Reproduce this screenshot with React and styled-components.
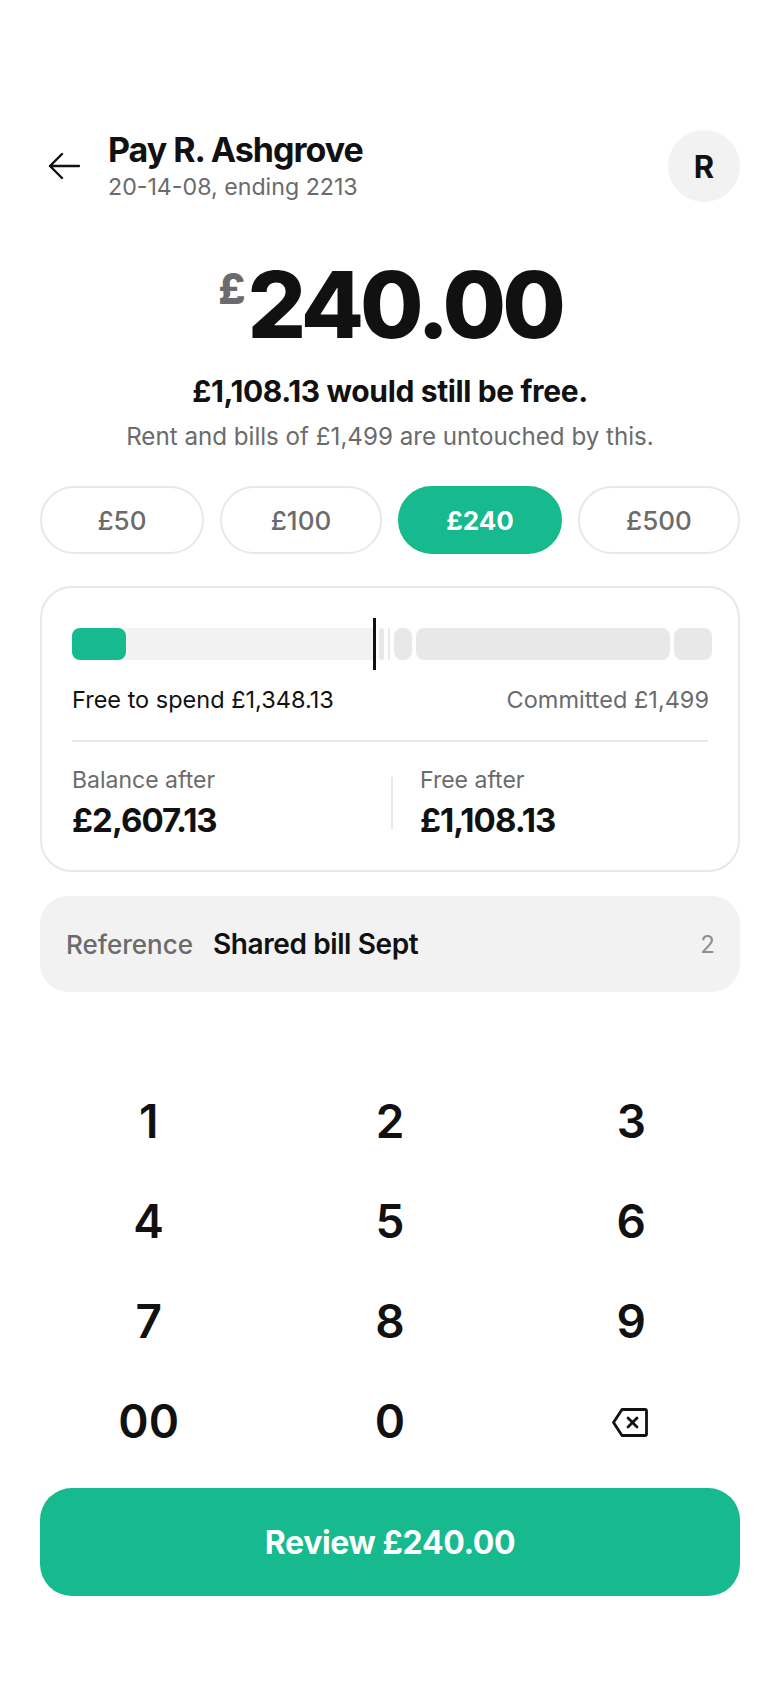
import React from "react";
import styled, { createGlobalStyle } from "styled-components";

const Global = createGlobalStyle`
  html, body { margin: 0; padding: 0; background: #fff; }
  body { font-family: Inter, "Noto Sans", sans-serif; color: #111; }
  * { box-sizing: border-box; }
`;
const Page = styled.div`
  width: 780px; height: 1688px; padding: 130px 40px 0; display: flex; flex-direction: column;
`;
const Header = styled.header`display: flex; align-items: center; height: 72px;`;
const BackButton = styled.div`width: 68px; display: flex; padding-left: 8px; align-items: center;`;
const Titles = styled.div`flex: 1; display: flex; flex-direction: column;`;
const Title = styled.div`font-size: 34px; line-height: 40px; font-weight: 700; letter-spacing: -1.02px;`;
const Sub = styled.div`font-size: 23.2px; line-height: 30px; color: #6b6b6b; margin-top: 2px;`;
const Avatar = styled.div`
  width: 72px; height: 72px; border-radius: 50%; background: #f2f2f2; display: flex;
  align-items: center; justify-content: center; font-size: 31px; font-weight: 700;
`;
const Amount = styled.div`
  display: flex; justify-content: center; align-items: flex-start; margin-top: 53px; height: 100px;
`;
const Pound = styled.span`font-size: 42px; line-height: 56px; font-weight: 800; color: #6b6b6b; margin: 6px 2px 0 0;`;
const Digits = styled.span`font-size: 92px; line-height: 100px; font-weight: 800; letter-spacing: -4px;`;
const Headline = styled.div`text-align: center; font-size: 30px; line-height: 36px; font-weight: 700; letter-spacing: -0.37px; margin-top: 18px;`;
const Note = styled.div`text-align: center; font-size: 24.15px; line-height: 32px; color: #6b6b6b; margin-top: 12px;`;
const Pills = styled.div`display: grid; grid-template-columns: 164fr 162fr 164fr 162fr; gap: 16px; margin-top: 33px;`;
const Pill = styled.div`
  height: 68px; border-radius: 34px; display: flex; align-items: center; justify-content: center;
  font-size: 26px; font-weight: ${p => (p.$on ? 700 : 500)};
  background: ${p => (p.$on ? "#17b98e" : "#fff")}; color: ${p => (p.$on ? "#fff" : "#6b6b6b")};
  border: 2px solid ${p => (p.$on ? "#17b98e" : "#e8e8e8")};
`;
const Card = styled.section`
  margin-top: 32px; height: 286px; border: 2px solid #e8e8e8; border-radius: 32px; padding: 40px 30px 0;
`;
const Bar = styled.div`position: relative; display: flex; gap: 4px; height: 32px; width: 640px;`;
const Track = styled.div`
  width: 303px; height: 32px; background: #f2f2f2; border-radius: 8px 0 0 8px;
`;
const Fill = styled.div`width: 54px; height: 32px; background: #17b98e; border-radius: 8px;`;
const Segment = styled.div`height: 32px; background: #e8e8e8; border-radius: 8px; flex: none; width: ${p => p.$w}px;`;
const Marker = styled.div`position: absolute; left: 301px; top: -10px; width: 3px; height: 52px; background: #111;`;
const Legend = styled.div`display: flex; justify-content: space-between; width: 637px; margin-top: 24px; font-size: 23.5px; line-height: 32px;`;
const LegendDim = styled.span`color: #6b6b6b;`;
const Divider = styled.div`width: 636px; height: 2px; background: #e8e8e8; margin-top: 24px;`;
const Stats = styled.div`display: grid; grid-template-columns: 319px 2px 1fr; width: 636px; margin-top: 24px;`;
const Stat = styled.div`display: flex; flex-direction: column; padding-left: ${p => p.$inset || 0}px;`;
const StatSep = styled.div`width: 2px; height: 52px; background: #e8e8e8; align-self: center;`;
const StatLabel = styled.div`font-size: 23px; line-height: 28px; color: #6b6b6b;`;
const StatValue = styled.div`font-size: 33px; line-height: 40px; font-weight: 700; letter-spacing: -0.99px; margin-top: 6px;`;
const Reference = styled.div`
  margin-top: 24px; height: 96px; background: #f2f2f2; border-radius: 28px; display: flex; align-items: center; padding: 0 25px 0 26px;
`;
const RefLabel = styled.span`font-size: 26px; font-weight: 500; color: #6b6b6b; margin-right: 20px;`;
const RefValue = styled.span`font-size: 28px; font-weight: 600; letter-spacing: -0.4px; flex: 1;`;
const RefCount = styled.span`font-size: 24px; color: #8e8e8e;`;
const Keypad = styled.div`display: grid; grid-template-columns: repeat(3, 1fr); grid-auto-rows: 100px; margin: 79px -12px 0;`;
const Key = styled.div`display: flex; align-items: center; justify-content: center; font-size: 46px; font-weight: 600;`;
const BackspaceIcon = styled.svg`margin: 2px 2px 0 0;`;
const Cta = styled.div`
  margin-top: 17px; height: 108px; border-radius: 32px; background: #17b98e; color: #fff;
  display: flex; align-items: center; justify-content: center; font-size: 32px; font-weight: 700; letter-spacing: -0.38px;
`;

const keys = ["1", "2", "3", "4", "5", "6", "7", "8", "9", "00", "0"];

export default function App() {
  return (
    <Page>
      <Global />
      <Header>
        <BackButton>
          <svg width="32" height="30" viewBox="0 0 32 30" fill="none" stroke="#111" strokeWidth="2.4" strokeLinecap="round" strokeLinejoin="round">
            <path d="M31 15H2M14 3L2 15l12 12" />
          </svg>
        </BackButton>
        <Titles>
          <Title>Pay R. Ashgrove</Title>
          <Sub>20-14-08, ending 2213</Sub>
        </Titles>
        <Avatar>R</Avatar>
      </Header>
      <Amount>
        <Pound>£</Pound>
        <Digits>240.00</Digits>
      </Amount>
      <Headline>£1,108.13 would still be free.</Headline>
      <Note>Rent and bills of £1,499 are untouched by this.</Note>
      <Pills>
        {["£50", "£100", "£240", "£500"].map(v => <Pill key={v} $on={v === "£240"}>{v}</Pill>)}
      </Pills>
      <Card>
        <Bar>
          <Track><Fill /></Track>
          <Segment $w={5} />
          <Segment $w={2} />
          <Segment $w={18} />
          <Segment $w={254} />
          <Segment $w={38} />
          <Marker />
        </Bar>
        <Legend><span>Free to spend £1,348.13</span><LegendDim>Committed £1,499</LegendDim></Legend>
        <Divider />
        <Stats>
          <Stat>
            <StatLabel>Balance after</StatLabel>
            <StatValue>£2,607.13</StatValue>
          </Stat>
          <StatSep />
          <Stat $inset={27}>
            <StatLabel>Free after</StatLabel>
            <StatValue>£1,108.13</StatValue>
          </Stat>
        </Stats>
      </Card>
      <Reference>
        <RefLabel>Reference</RefLabel>
        <RefValue>Shared bill Sept</RefValue>
        <RefCount>2</RefCount>
      </Reference>
      <Keypad>
        {keys.map(k => <Key key={k}>{k}</Key>)}
        <Key>
          <BackspaceIcon width="36" height="29" viewBox="0 0 36 29" fill="none" stroke="#111" strokeWidth="2.8" strokeLinecap="round" strokeLinejoin="round">
            <path d="M10 1.5H33a1.5 1.5 0 0 1 1.5 1.5V26a1.5 1.5 0 0 1-1.5 1.5H10L1.5 14.5z" />
            <path d="M16 10l9 9M25 10l-9 9" />
          </BackspaceIcon>
        </Key>
      </Keypad>
      <Cta>Review £240.00</Cta>
    </Page>
  );
}
